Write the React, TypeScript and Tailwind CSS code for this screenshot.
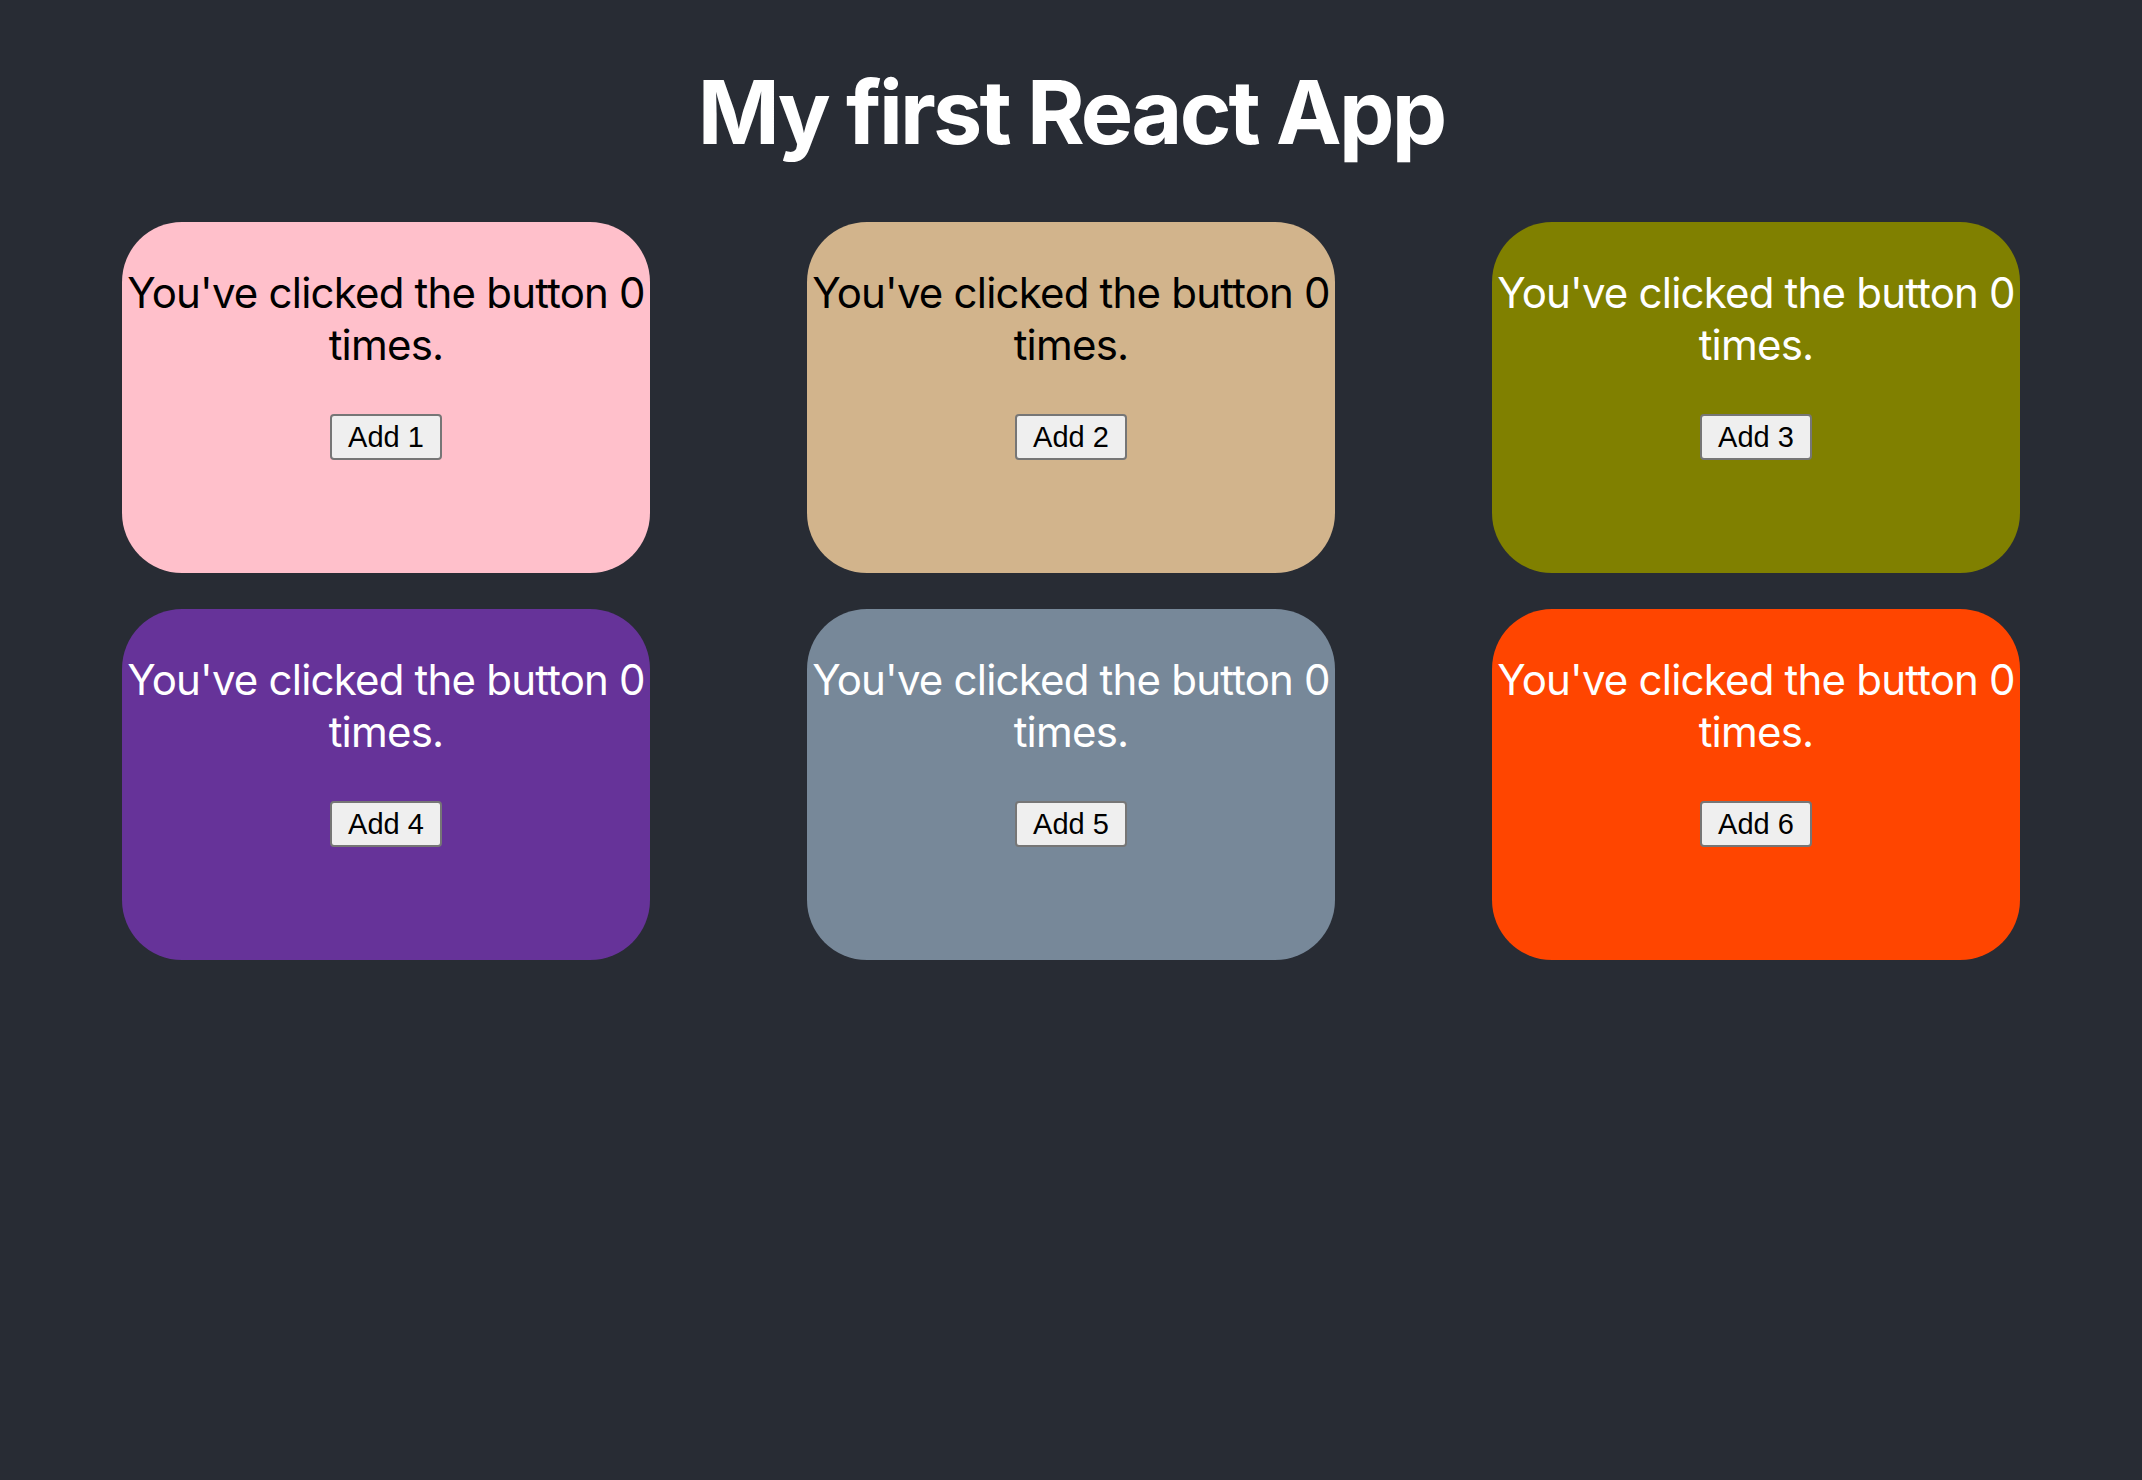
const counters = [
  { id: 1, bg: "bg-[#ffc0cb]", text: "text-black" },
  { id: 2, bg: "bg-[#d2b48c]", text: "text-black" },
  { id: 3, bg: "bg-[#808000]", text: "text-white" },
  { id: 4, bg: "bg-[#663399]", text: "text-white" },
  { id: 5, bg: "bg-[#778899]", text: "text-white" },
  { id: 6, bg: "bg-[#ff4500]", text: "text-white" },
];

function Counter({ id, bg, text }: { id: number; bg: string; text: string }) {
  const count = 0;
  return (
    <div
      className={`${bg} ${text} h-[351px] rounded-[60px] flex flex-col items-center pt-[45px] text-center`}
    >
      <p className="text-[42px] leading-[52px] tracking-[-0.8px]">
        You've clicked the button {count} times.
      </p>
      <button className="mt-[43px] h-[46px] px-[16px] bg-[#efefef] text-black border-2 border-[#767676] rounded-[4px] text-[29px] leading-none font-['Liberation_Sans',Arial,sans-serif]">
        Add {id}
      </button>
    </div>
  );
}

export default function App() {
  return (
    <div className="min-h-screen bg-[#282c34] font-['Inter',sans-serif]">
      {/* Header */}
      <h1 className="pt-[58px] text-center text-white font-bold text-[88px] leading-[108px] tracking-[-2.8px]">
        My first React App
      </h1>

      {/* Counters */}
      <div className="mt-[56px] px-[122px] grid grid-cols-[repeat(3,528px)] justify-between gap-y-[36px]">
        {counters.map((c) => (
          <Counter key={c.id} {...c} />
        ))}
      </div>
    </div>
  );
}
